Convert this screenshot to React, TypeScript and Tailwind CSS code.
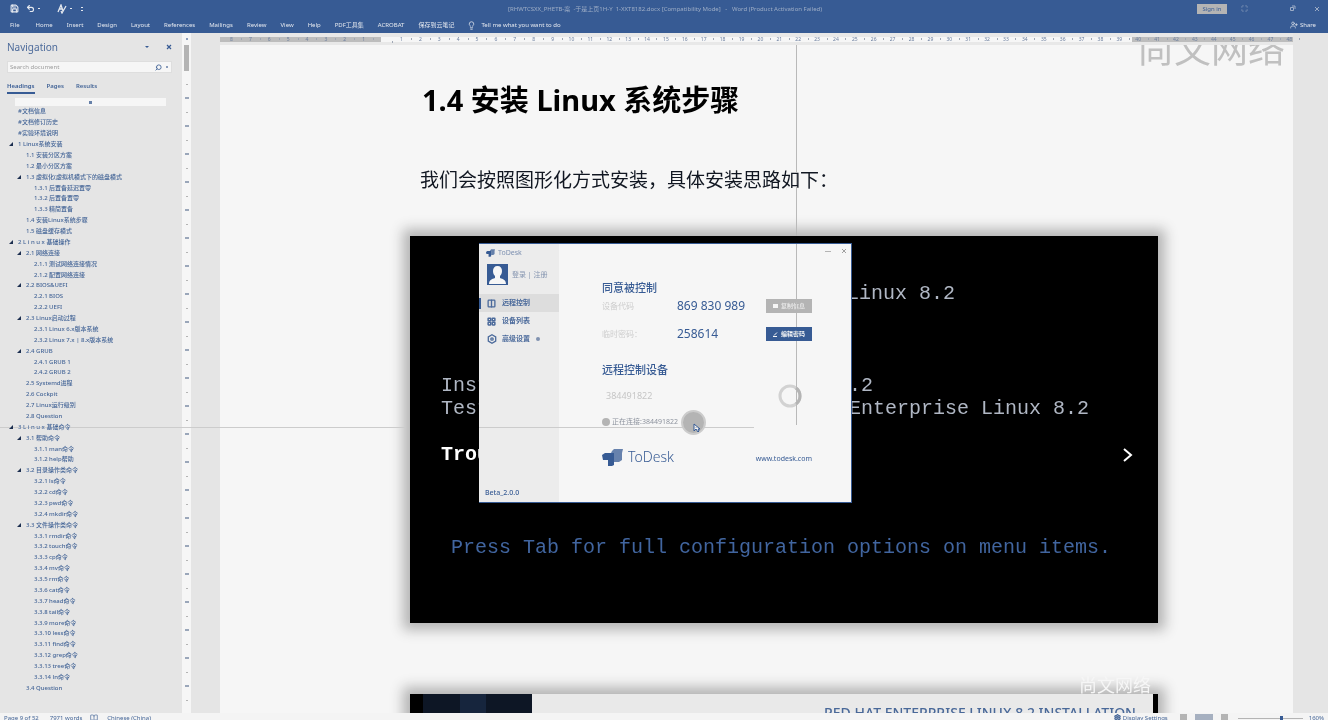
import React from "react";
import { Save, Undo2, Lightbulb, UserPlus, Search, BookOpen, Maximize, Settings, LayoutGrid, Columns2 } from "lucide-react";

const tabs = ["File", "Home", "Insert", "Design", "Layout", "References", "Mailings", "Review", "View", "Help", "PDF工具集", "ACROBAT", "保存到云笔记"];

type Heading = { level: 1 | 2 | 3; text: string; open?: boolean };

const headings: Heading[] = [
  { level: 1, text: "#文档信息" },
  { level: 1, text: "#文档修订历史" },
  { level: 1, text: "#实验环境说明" },
  { level: 1, text: "1 Linux系统安装", open: true },
  { level: 2, text: "1.1 安装分区方案" },
  { level: 2, text: "1.2 最小分区方案" },
  { level: 2, text: "1.3 虚拟化(虚拟机模式下的磁盘模式", open: true },
  { level: 3, text: "1.3.1 后置备延迟置零" },
  { level: 3, text: "1.3.2 后置备置零" },
  { level: 3, text: "1.3.3 精简置备" },
  { level: 2, text: "1.4 安装Linux系统步骤" },
  { level: 2, text: "1.5 磁盘缓存模式" },
  { level: 1, text: "2 L i n u x 基础操作", open: true },
  { level: 2, text: "2.1 网络连接", open: true },
  { level: 3, text: "2.1.1 测试网络连接情况" },
  { level: 3, text: "2.1.2 配置网络连接" },
  { level: 2, text: "2.2 BIOS&UEFI", open: true },
  { level: 3, text: "2.2.1 BIOS" },
  { level: 3, text: "2.2.2 UEFI" },
  { level: 2, text: "2.3 Linux启动过程", open: true },
  { level: 3, text: "2.3.1 Linux 6.x版本系统" },
  { level: 3, text: "2.3.2 Linux 7.x | 8.x版本系统" },
  { level: 2, text: "2.4 GRUB", open: true },
  { level: 3, text: "2.4.1 GRUB 1" },
  { level: 3, text: "2.4.2 GRUB 2" },
  { level: 2, text: "2.5 Systemd进程" },
  { level: 2, text: "2.6 Cockpit" },
  { level: 2, text: "2.7 Linux运行级别" },
  { level: 2, text: "2.8 Question" },
  { level: 1, text: "3 L i n u x 基础命令", open: true },
  { level: 2, text: "3.1 帮助命令", open: true },
  { level: 3, text: "3.1.1 man命令" },
  { level: 3, text: "3.1.2 help帮助" },
  { level: 2, text: "3.2 目录操作类命令", open: true },
  { level: 3, text: "3.2.1 ls命令" },
  { level: 3, text: "3.2.2 cd命令" },
  { level: 3, text: "3.2.3 pwd命令" },
  { level: 3, text: "3.2.4 mkdir命令" },
  { level: 2, text: "3.3 文件操作类命令", open: true },
  { level: 3, text: "3.3.1 rmdir命令" },
  { level: 3, text: "3.3.2 touch命令" },
  { level: 3, text: "3.3.3 cp命令" },
  { level: 3, text: "3.3.4 mv命令" },
  { level: 3, text: "3.3.5 rm命令" },
  { level: 3, text: "3.3.6 cat命令" },
  { level: 3, text: "3.3.7 head命令" },
  { level: 3, text: "3.3.8 tail命令" },
  { level: 3, text: "3.3.9 more命令" },
  { level: 3, text: "3.3.10 less命令" },
  { level: 3, text: "3.3.11 find命令" },
  { level: 3, text: "3.3.12 grep命令" },
  { level: 3, text: "3.3.13 tree命令" },
  { level: 3, text: "3.3.14 ln命令" },
  { level: 2, text: "3.4 Question" },
];

const indent = { 1: "pl-[9px]", 2: "pl-[17px]", 3: "pl-[25px]" };

const rulerMarks = Array.from({ length: 57 }, (_, i) => Math.abs(i - 8));

function TitleBar() {
  return (
    <header className="flex h-[33px] shrink-0 flex-col bg-[#375b94] text-[6px] leading-[8px] text-[#e4e8ef]">
      <div className="flex h-[17px] items-center pr-2 pl-[10px]">
        <div className="flex flex-1 items-center">
          <button aria-label="Save"><Save className="size-[9px]" strokeWidth={3} /></button>
          <button aria-label="Undo" className="ml-[7px] flex items-center gap-[3px]"><Undo2 className="size-[9px]" strokeWidth={3} /><i className="h-px w-[2px] bg-current" /></button>
          <button aria-label="Styles" className="ml-[17px] flex items-center gap-[3px]">
            <svg viewBox="0 0 10 10" className="size-[10px]" fill="none" stroke="currentColor" strokeWidth="1.3"><path d="M1 8 4 1l2 6M2 5h3M9 2 5 9 4 7" /></svg>
            <i className="h-px w-[2px] bg-current" />
          </button>
          <button aria-label="Customize toolbar" className="ml-[9px] flex flex-col gap-[2px]"><i className="h-px w-[2px] bg-current" /><i className="h-px w-[2px] bg-current" /></button>
        </div>
        <h1 className="whitespace-nowrap text-[6px] text-[#9dadc6]">[RHWTCSXX_PHETB-案 &nbsp;-于是上页1H-Y &nbsp;1-XXT8182.docx [Compatibility Mode] &nbsp; - &nbsp; Word (Product Activation Failed)</h1>
        <div className="flex flex-1 items-center justify-end">
          <button className="h-[10px] w-[30px] bg-[#b4b4b4] text-[#375b94]">Sign in</button>
          <button aria-label="Ribbon display options" className="ml-[14px]"><Maximize className="size-[7px] text-[#9dadc6]" /></button>
          <button aria-label="Restore" className="ml-[41px]"><svg viewBox="0 0 7 7" className="size-[7px]" fill="none" stroke="#9dadc6"><path d="M1.5 2.5h3v3h-3zM3 1h3v3" /></svg></button>
          <button aria-label="Close" className="ml-[18px]"><svg viewBox="0 0 6 6" className="size-[6px]" stroke="#9dadc6"><path d="m1 1 4 4M5 1 1 5" /></svg></button>
        </div>
      </div>
      <nav className="flex h-4 items-center pr-3 pl-[10px] whitespace-nowrap">
        <div className="flex gap-[14px]">
          {tabs.map((t) => <button key={t} className={t === "File" ? "mr-[2px]" : ""}>{t}</button>)}
        </div>
        <Lightbulb className="ml-[13px] size-[9px]" strokeWidth={2} />
        <button className="ml-[5px]">Tell me what you want to do</button>
        <button className="ml-auto flex items-center gap-[2px]"><UserPlus className="size-2" strokeWidth={2} />Share</button>
      </nav>
    </header>
  );
}

function Navigation() {
  return (
    <aside className="flex w-[182px] shrink-0 flex-col bg-[#e5e5e5] pb-[20px] text-[#446597]">
      <div className="flex items-center pt-[8px] pr-[10px] pl-[7px]">
        <h2 className="text-[10px] leading-[12px] text-[#4d6b9b]">Navigation</h2>
        <i className="ml-auto border-x-2 border-t-2 border-x-transparent border-t-[#375b94]" />
        <button aria-label="Close navigation" className="ml-[17px]"><svg viewBox="0 0 6 6" className="size-[6px]" stroke="#375b94" strokeWidth="1.2"><path d="m1 1 4 4M5 1 1 5" /></svg></button>
      </div>
      <div className="mt-[8px] mr-[10px] ml-[7px] flex h-[12px] items-center border border-[#dedede] bg-[#f6f6f6] pr-[3px] pl-[2px]">
        <input aria-label="Search document" placeholder="Search document" className="w-full min-w-0 flex-1 text-[6px] leading-[8px] outline-none placeholder:text-[#9c9c9c]" />
        <Search className="size-[7px] -scale-x-100" strokeWidth={3} />
        <i className="ml-[4px] size-[2px] bg-[#8a9cbb]" />
      </div>
      <div className="mt-[8px] flex gap-[12px] pl-[7px] text-[6px] leading-[11px] font-semibold">
        <button className="border-b-2 border-[#375b94] text-[#375b94]">Headings</button>
        <button className="border-b-2 border-transparent">Pages</button>
        <button className="border-b-2 border-transparent">Results</button>
      </div>
      <div className="mt-[4px] mr-[16px] ml-[15px] flex h-[8px] items-center justify-center bg-[#f6f6f6]"><i className="size-[3px] bg-[#6680a8]" /></div>
      <ul className="flex min-h-0 flex-1 flex-col text-[6px] leading-[10px] font-medium">
        {headings.map((h) => (
          <li key={h.text} className={`flex min-h-0 flex-1 items-center whitespace-nowrap ${indent[h.level]}`}>
            <span className="flex w-[9px] shrink-0">
              {h.open && <svg viewBox="0 0 4 4" className="size-[4px]"><path d="M4 0v4H0z" fill="#1c2f50" /></svg>}
            </span>
            <a href="#heading">{h.text}</a>
          </li>
        ))}
      </ul>
    </aside>
  );
}

function VerticalRuler() {
  return (
    <div className="flex w-[9px] shrink-0 flex-col items-center overflow-hidden bg-[#f6f6f6]">
      <i className="mt-[5px] size-[2px] shrink-0 bg-[#8a9cbb]" />
      <i className="mt-[5px] h-[26px] w-[5px] shrink-0 bg-[#b4b4b4]" />
      {Array.from({ length: 23 }, (_, i) => (
        <div key={i} className="flex h-[28px] shrink-0 flex-col items-center justify-between pt-[13px]">
          <i className="h-px w-[2px] bg-[#b4b4b4]" />
          <i className="h-[2px] w-[4px] bg-[#9ba7ba]" />
        </div>
      ))}
    </div>
  );
}

function Ruler() {
  return (
    <div className="relative z-10 mr-[35px] flex h-[12px] shrink-0 items-center bg-[#e8e8e8]">
      <i className="h-[5px] w-[161px] bg-[#bdbdbd]" />
      <i className="h-[5px] flex-1 bg-[#f6f6f6]" />
      <i className="h-[5px] w-[161px] bg-[#bdbdbd]" />
      <ol className="absolute inset-y-0 -right-[6px] left-[2px] flex items-center text-[5px] leading-[6px] text-[#6c7f9f]">
        {rulerMarks.map((n, i) => (
          <li key={i} className="relative flex-1 text-center">
            {n || ""}
            <i className="absolute top-[2px] -right-px h-[2px] w-px bg-[#a0a8b5]" />
          </li>
        ))}
      </ol>
    </div>
  );
}

function ToDeskMark({ className }: { className: string }) {
  return (
    <svg viewBox="0 0 21 17" className={className} fill="#375b94">
      <path d="M10 2 12 0h9l-1 4v7l-3 2h-5V4H9z" opacity=".75" />
      <path d="M0 6 3 4h9v12l-2 1H6v-6H1z" />
    </svg>
  );
}

function ToDesk() {
  return (
    <section aria-label="ToDesk" className="absolute top-[7px] left-[69px] flex h-[260px] w-[373px] border-t border-r border-b border-[#375b94] bg-[#f6f6f6] font-['Noto_Sans','Noto_Sans_CJK_SC',sans-serif] text-[#375b94]">
      <div className="flex w-[80px] shrink-0 flex-col bg-[#ececec] text-[7px] leading-[10px]">
        <div className="flex items-center gap-[3px] pt-[4px] pl-[7px] text-[#7e91b1]"><ToDeskMark className="h-[8px] w-[9px]" />ToDesk</div>
        <div className="mt-[6px] flex items-center gap-[4px] pl-[8px] text-[#8595b0]">
          <svg viewBox="0 0 21 21" className="size-[21px] shrink-0"><path fill="#375b94" d="M0 0h21v21H0z" /><path fill="#f6f6f6" d="M10.500 2c3 0 4.500 2 4.500 5 0 2-.8 4-2 5v2c3 1 6 2 6 6H2c0-4 3-5 6-6v-2c-1.200-1-2-3-2-5 0-3 1.500-5 4.500-5z" /></svg>
          <a href="#login" className="whitespace-nowrap">登录 | 注册</a>
        </div>
        <nav className="mt-[9px] flex flex-col font-bold text-[#4b6a9b]">
          <button className="flex h-[18px] items-center bg-[#dddddd]"><i className="mr-[6px] h-[11px] w-[2px] bg-[#375b94]" /><Columns2 className="mr-[6px] size-[9px]" strokeWidth={3.5} />远程控制</button>
          <button className="flex h-[18px] items-center pl-[8px]"><LayoutGrid className="mr-[6px] size-[9px]" strokeWidth={4} />设备列表</button>
          <button className="flex h-[18px] items-center pl-[8px]">
            <svg viewBox="0 0 10 10" className="mr-[5px] size-[10px]" fill="none" stroke="currentColor" strokeWidth="1.3"><path d="m5 .8 3.700 2.100v4.200L5 9.200 1.300 7.100V2.900z" /><circle cx="5" cy="5" r="1.2" /></svg>
            高级设置<i className="ml-[6px] size-[4px] rounded-full bg-[#8092b0]" />
          </button>
        </nav>
        <p className="mt-auto pb-[4px] pl-[6px] font-medium">Beta_2.0.0</p>
      </div>
      <div className="flex flex-1 flex-col pr-[39px] pl-[43px]">
        <div className="-mr-[35px] flex items-center justify-end gap-[10px] pt-[4px]">
          <button aria-label="Minimize" className="flex"><i className="h-px w-[6px] bg-[#b4b4b4]" /></button>
          <button aria-label="Close" className="flex"><svg viewBox="0 0 6 6" className="size-[6px]" stroke="#a0a0a0"><path d="m1 1 4 4M5 1 1 5" /></svg></button>
        </div>
        <h3 className="mt-[26px] text-[11px] leading-[16px] font-medium">同意被控制</h3>
        <div className="mt-[3px] flex h-[14px] items-center">
          <span className="w-[75px] text-[8px] leading-[10px] text-[#cdcdcd]">设备代码</span>
          <span className="text-[12px] leading-[14px]">869 830 989</span>
          <button className="ml-auto flex h-[14px] w-[46px] items-center justify-center gap-[3px] bg-[#b4b4b4] text-[6px] leading-[8px] text-[#f6f6f6]"><i className="h-[4px] w-[5px] bg-current" />复制信息</button>
        </div>
        <div className="mt-[14px] flex h-[14px] items-center">
          <span className="w-[75px] text-[8px] leading-[10px] text-[#cdcdcd]">临时密码：</span>
          <span className="text-[12px] leading-[14px]">258614</span>
          <button className="ml-auto flex h-[14px] w-[46px] items-center justify-center gap-[3px] bg-[#375b94] text-[6px] leading-[8px] font-bold text-[#f6f6f6]"><svg viewBox="0 0 5 5" className="size-[5px]" stroke="currentColor"><path d="M0 4.500h4M1 3.500 4 .5" /></svg>编辑密码</button>
        </div>
        <h3 className="mt-[21px] text-[11px] leading-[16px] font-medium">远程控制设备</h3>
        <div className="mt-[5px] flex h-[25px] items-center">
          <input aria-label="远程设备代码" defaultValue="384491822" className="w-[100px] pl-[4px] text-[9px] leading-[12px] text-[#c6c6c6] outline-none" />
          <svg viewBox="0 0 24 24" className="mr-[10px] ml-auto size-[24px]" fill="none"><circle cx="12" cy="12" r="10" stroke="#d2d2d2" strokeWidth="3" /><path d="M18 4a10 10 0 0 1 0 16" stroke="#b4b4b4" strokeWidth="3" /></svg>
        </div>
        <div className="mt-px flex h-[26px] items-center text-[7px] leading-[10px] whitespace-nowrap text-[#8d939e]">
          <i className="mr-[2px] size-[8px] rounded-full bg-[#b4b4b4]" />正在连接:384491822
          <span className="relative ml-[3px] size-[25px] rounded-full border-2 border-[#cccccc] bg-[#b4b4b4]">
            <svg viewBox="0 0 7 10" className="absolute top-[11px] left-[10px] h-[10px] w-[7px]" fill="#f6f6f6" stroke="#375b94"><path d="M1 1v7l2-2 2 3 1-1-1-2h2z" /></svg>
          </span>
        </div>
        <div className="mt-[13px] flex items-center">
          <ToDeskMark className="mr-[5px] h-[17px] w-[21px]" />
          <span className="text-[14px] leading-[18px] font-light">ToDesk</span>
          <a href="#todesk" className="ml-auto pt-[3px] text-[7px] leading-[10px]">www.todesk.com</a>
        </div>
      </div>
    </section>
  );
}

function BootMenu() {
  return (
    <figure className="relative mt-[42px] h-[387px] bg-black font-['Liberation_Mono',monospace] text-[20px] leading-[23px] whitespace-pre text-[#b0b7c4] shadow-[0_0_12px_7px_#b4b4b4]">
      <p className="pt-[46px] pl-[209px]">Red Hat Enterprise Linux 8.2</p>
      <p className="mt-[69px] pl-[31px]">Install Red Hat Enterprise Linux 8.2</p>
      <p className="pl-[31px]">Test this media & install Red Hat Enterprise Linux 8.2</p>
      <div className="mt-[23px] flex items-center justify-between pr-[25px] pl-[31px] font-bold text-white">
        <span>Troubleshooting</span>
        <svg viewBox="0 0 10 14" className="h-[14px] w-[10px]" fill="none" stroke="currentColor" strokeWidth="2"><path d="m1 1 7 6-7 6" /></svg>
      </div>
      <p className="mt-[70px] pl-[41px] text-[#41659f]">Press Tab for full configuration options on menu items.</p>
      <ToDesk />
    </figure>
  );
}

function Document() {
  return (
    <main className="flex min-w-0 flex-1 flex-col bg-[#e5e5e5] pl-[29px]">
      <Ruler />
      <article className="relative mr-[35px] min-h-0 flex-1 overflow-hidden bg-[#f6f6f6] pr-[135px] pl-[190px]">
        <p className="absolute -top-[24px] right-[8px] text-[37px] leading-[56px] whitespace-nowrap text-[#c0c0c0]">尚文网络</p>
        <h2 className="pt-[36px] pl-[12px] text-[29px] leading-[38px] font-bold text-black">1.4 安装 Linux 系统步骤</h2>
        <p className="mt-[48px] pl-[10px] text-[19px] leading-[27px] text-[#111722]">我们会按照图形化方式安装，具体安装思路如下：</p>
        <BootMenu />
        <figure className="relative mt-[71px] flex h-[30px] border-r-[5px] border-black bg-[#e9e9e9] shadow-[0_0_12px_7px_#b4b4b4]">
          <i className="w-[13px] bg-black" />
          <i className="w-[37px] bg-[#0d1625]" />
          <i className="w-[26px] bg-[#16253d]" />
          <i className="w-[46px] bg-[#0d1625]" />
          <figcaption className="ml-auto pt-[10px] pr-[17px] text-[14px] leading-[18px] font-medium text-[#4a6999]">RED HAT ENTERPRISE LINUX 8.2 INSTALLATION</figcaption>
          <span className="absolute -top-[18px] right-[2px] text-[18px] leading-[18px] text-[#f6f6f6]">尚文网络</span>
        </figure>
      </article>
    </main>
  );
}

function StatusBar() {
  return (
    <footer className="flex h-[7px] shrink-0 overflow-hidden bg-[#f4f4f4] pt-px pr-[4px] pl-[4px] text-[6px] leading-[8px] whitespace-nowrap text-[#446597]">
      <span>Page 9 of 52</span>
      <span className="ml-[11px]">7971 words</span>
      <BookOpen className="ml-[8px] size-[8px] shrink-0" />
      <span className="ml-[9px]">Chinese (China)</span>
      <span className="ml-auto flex gap-[2px]"><Settings className="size-[7px]" strokeWidth={4} />Display Settings</span>
      <i className="ml-[12px] h-[7px] w-[7px] bg-[#b4b4b4]" />
      <i className="ml-[8px] h-[7px] w-[18px] bg-[#a6b0c0]" />
      <i className="ml-[8px] h-[7px] w-[7px] bg-[#b4b4b4]" />
      <i className="mt-[4px] ml-[10px] h-px w-[42px] bg-[#b4b4b4]" />
      <i className="mt-[2px] h-[5px] w-[3px] bg-[#375b94]" />
      <i className="mt-[4px] h-px w-[20px] bg-[#b4b4b4]" />
      <span className="ml-[6px]">160%</span>
    </footer>
  );
}

export default function App() {
  return (
    <div className="relative flex h-screen flex-col overflow-hidden bg-[#e5e5e5] font-['Noto_Sans','Noto_Sans_CJK_SC',sans-serif]">
      <TitleBar />
      <div className="flex min-h-0 flex-1">
        <Navigation />
        <VerticalRuler />
        <Document />
      </div>
      <StatusBar />
      <i className="pointer-events-none absolute top-[33px] left-[796px] h-[392px] w-px bg-[#b9b9b9] mix-blend-darken" />
      <i className="pointer-events-none absolute top-[427px] left-0 h-px w-[754px] bg-[#cccccc] mix-blend-darken" />
    </div>
  );
}
